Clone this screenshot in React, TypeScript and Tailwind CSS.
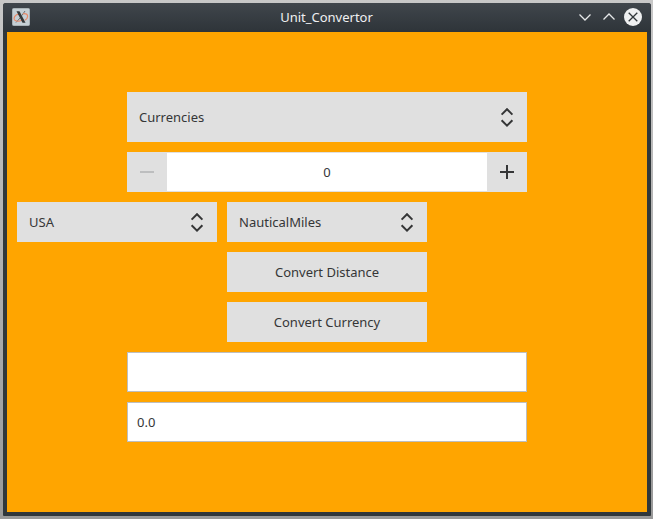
import React from "react";

function UpDown() {
  return (
    <svg width="14" height="20" viewBox="0 0 14 20" fill="none" stroke="#353637" strokeWidth="2" className="shrink-0">
      <path d="M1.6 7.6 7 2.2l5.4 5.4M1.6 13.2 7 18.6l5.4-5.4" />
    </svg>
  );
}

function Combo({ label, size }: { label: string; size: string }) {
  return (
    <button className={`flex items-center justify-between bg-[#e0e0e0] pr-[13px] pl-3 ${size}`}>
      <span>{label}</span>
      <UpDown />
    </button>
  );
}

function Action({ label }: { label: string }) {
  return <button className="ml-[220px] h-10 w-[200px] bg-[#e0e0e0] text-center">{label}</button>;
}

function Field({ value }: { value: string }) {
  return (
    <div className="ml-[120px] flex h-10 w-[400px] items-center border border-[#bdbebf] bg-white px-[9px]">
      {value}
    </div>
  );
}

function TitleBar() {
  return (
    <header className="flex h-[29px] items-center bg-linear-to-b from-[#40464c] to-[#2e3439] pr-[7px] pb-[2px] pl-[9px] text-[#eff0f1]">
      <svg width="18" height="18" viewBox="0 0 18 18" className="shrink-0">
        <rect x="0.5" y="0.5" width="17" height="17" rx="1" fill="#c6d0d5" stroke="#a9b2b6" />
        <path d="M13 3 9.8 7.6M8 10l-4 4.5" stroke="#6b7072" strokeWidth="1" />
        <path d="M7 6.2C3 6.6 1.3 9.5 2.4 11.8c1.2 2 5 1.8 7.8.2M11 5.8c3-.5 4.8.5 4.6 2.7-.1 1.7-1.2 3-2.8 3.8" fill="none" stroke="#e88a6a" strokeWidth="1.2" />
        <path d="M4.5 3.2h3l6 11.6h-3z" fill="#343839" />
      </svg>
      <h1 className="flex-1 pl-[45px] text-center text-[13px] leading-5">Unit_Convertor</h1>
      <div className="flex items-center">
        <svg width="66" height="20" viewBox="0 0 66 20" fill="none" stroke="#e6e8e9" strokeWidth="1.3">
          <path d="m1.5 7.5 5.5 5.5 5.5-5.5M25.5 12.5 31 7l5.5 5.5" />
          <circle cx="55" cy="10" r="9" fill="#eff0f1" stroke="none" />
          <path d="m50.7 5.7 8.6 8.6m0-8.6-8.6 8.6" stroke="#30363a" />
        </svg>
      </div>
    </header>
  );
}

export default function App() {
  return (
    <div className="h-[519px] w-[653px] overflow-hidden bg-linear-to-b from-[#c8c8c8] to-[#999999] pt-[3px] pl-[3px] font-['Noto_Sans',sans-serif] text-[13px] leading-5 text-[#353637]">
      <div className="h-[513px] w-[648px] overflow-hidden rounded-t-[3px] rounded-b-[1px] bg-[#30373b]">
        <TitleBar />
        <main className="mx-1 flex h-[480px] flex-col gap-[10px] bg-[#ffa500] pt-[60px]">
          <Combo label="Currencies" size="ml-[120px] h-[50px] w-[400px]" />
          <div className="ml-[120px] flex h-10 w-[400px] bg-[#e0e0e0]">
            <button className="flex w-10 items-center justify-center">
              <span className="h-[2px] w-[14px] bg-[#bdbebf]" />
            </button>
            <div className="my-px flex flex-1 items-center justify-center bg-white">0</div>
            <button className="flex w-10 items-center justify-center">
              <svg width="14" height="14" viewBox="0 0 14 14" stroke="#353637" strokeWidth="2">
                <path d="M0 7h14M7 0v14" />
              </svg>
            </button>
          </div>
          <div className="ml-[10px] flex gap-[10px]">
            <Combo label="USA" size="h-10 w-[200px]" />
            <Combo label="NauticalMiles" size="h-10 w-[200px]" />
          </div>
          <Action label="Convert Distance" />
          <Action label="Convert Currency" />
          <Field value="" />
          <Field value="0.0" />
        </main>
      </div>
    </div>
  );
}
